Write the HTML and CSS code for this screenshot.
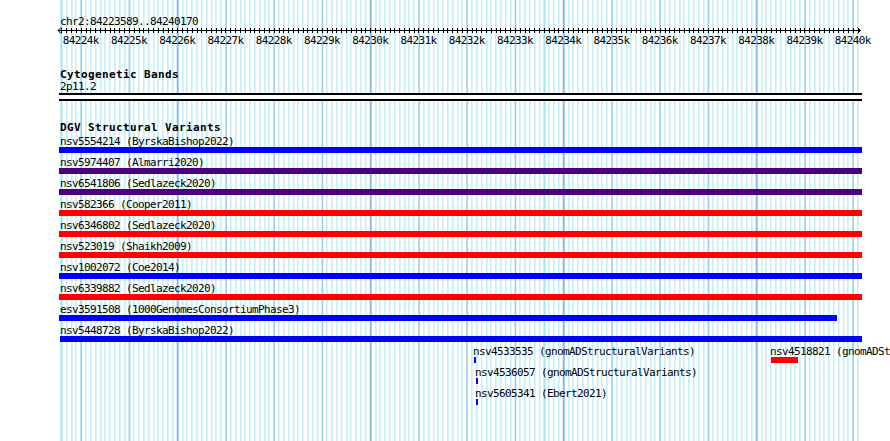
FILE: index.html
```html
<!DOCTYPE html>
<html lang="en">
<head>
	<meta charset="UTF-8">
	<title>DGV Structural Variants - chr2:84223589..84240170</title>
	<link rel="stylesheet" href="styles.css">
</head>
<body>
	<div id="tracks">
		<div class="pos">chr2:84223589..84240170</div>
		<svg class="axis" width="802" height="8" viewBox="0 0 802 8">
			<line x1="-2" y1="3.5" x2="800.5" y2="3.5" stroke="#000" stroke-width="1" />
			<line x1="1.4" y1="3.5" x2="800" y2="3.5" stroke="#000" stroke-width="5" stroke-dasharray="1 3.825" shape-rendering="crispEdges" />
			<polyline points="1,0.5 -2,3.5 1,6.5" fill="none" stroke="#000" stroke-width="1" />
			<polyline points="797.5,0.5 800.5,3.5 797.5,6.5" fill="none" stroke="#000" stroke-width="1" />
		</svg>
		<div class="ticks">
			<span>84224k</span><span>84225k</span><span>84226k</span><span>84227k</span>
			<span>84228k</span><span>84229k</span><span>84230k</span><span>84231k</span>
			<span>84232k</span><span>84233k</span><span>84234k</span><span>84235k</span>
			<span>84236k</span><span>84237k</span><span>84238k</span><span>84239k</span>
			<span>84240k</span>
		</div>

		<div class="title cyto">Cytogenetic Bands</div>
		<div class="band">2p11.2</div>
		<div class="sep"></div>

		<div class="title dgv">DGV Structural Variants</div>
		<div class="rows">
			<div class="row">
				<div class="feat"><div class="lbl">nsv5554214 (ByrskaBishop2022)</div><div class="bar gain" style="margin-left:-1px;width:803px"></div></div>
			</div>
			<div class="row">
				<div class="feat"><div class="lbl">nsv5974407 (Almarri2020)</div><div class="bar both" style="margin-left:-1px;width:803px"></div></div>
			</div>
			<div class="row">
				<div class="feat"><div class="lbl">nsv6541806 (Sedlazeck2020)</div><div class="bar both" style="margin-left:-1px;width:803px"></div></div>
			</div>
			<div class="row">
				<div class="feat"><div class="lbl">nsv582366 (Cooper2011)</div><div class="bar loss" style="margin-left:-1px;width:803px"></div></div>
			</div>
			<div class="row">
				<div class="feat"><div class="lbl">nsv6346802 (Sedlazeck2020)</div><div class="bar loss" style="margin-left:-1px;width:803px"></div></div>
			</div>
			<div class="row">
				<div class="feat"><div class="lbl">nsv523019 (Shaikh2009)</div><div class="bar loss" style="margin-left:-1px;width:803px"></div></div>
			</div>
			<div class="row">
				<div class="feat"><div class="lbl">nsv1002072 (Coe2014)</div><div class="bar gain" style="margin-left:-1px;width:803px"></div></div>
			</div>
			<div class="row">
				<div class="feat"><div class="lbl">nsv6339882 (Sedlazeck2020)</div><div class="bar loss" style="margin-left:-1px;width:803px"></div></div>
			</div>
			<div class="row">
				<div class="feat"><div class="lbl">esv3591508 (1000GenomesConsortiumPhase3)</div><div class="bar gain" style="margin-left:-1px;width:778px"></div></div>
			</div>
			<div class="row">
				<div class="feat"><div class="lbl">nsv5448728 (ByrskaBishop2022)</div><div class="bar gain" style="width:802px"></div></div>
			</div>
			<div class="row">
				<div class="feat" style="margin-left:413px"><div class="lbl">nsv4533535 (gnomADStructuralVariants)</div><div class="bar gain" style="margin-left:1px;width:2px"></div></div>
				<div class="feat" style="margin-left:710px"><div class="lbl">nsv4518821 (gnomADStructuralVariants)</div><div class="bar loss" style="margin-left:1px;width:27px"></div></div>
			</div>
			<div class="row">
				<div class="feat" style="margin-left:415px"><div class="lbl">nsv4536057 (gnomADStructuralVariants)</div><div class="bar gain" style="margin-left:1px;width:2px"></div></div>
			</div>
			<div class="row">
				<div class="feat" style="margin-left:415px"><div class="lbl">nsv5605341 (Ebert2021)</div><div class="bar gain" style="margin-left:1px;width:2px"></div></div>
			</div>
		</div>
	</div>
</body>
</html>
```

FILE: styles.css
```css
html, body{
	margin:0;
	padding:0;
	overflow:hidden;
	background:#fff;
}
body{
	width:890px;
	height:441px;
	font-family:"DejaVu Sans Mono", "Liberation Mono", monospace;
	font-size:11px;
	letter-spacing:-0.62px;
	line-height:10px;
	color:#000;
}
#tracks{
	margin-left:60px;
	width:802px;
	height:441px;
	padding-top:16px;
	box-sizing:border-box;
	background-color:#fff;
	background-image:
		repeating-linear-gradient(90deg, #8cbcee 0, #8cbcee 1px, transparent 1px, transparent 48.25px),
		repeating-linear-gradient(90deg, #a4e4ee 0, #a4e4ee 1px, transparent 1px, transparent 4.825px);
	background-position:20.7px 0, 1.4px 0;
}
.pos{
	height:10px;
	padding-top:1px;
	white-space:nowrap;
}
.axis{
	display:block;
	overflow:visible;
}
.ticks{
	display:flex;
	margin-left:-3.4px;
	height:10px;
	padding-top:1px;
	white-space:nowrap;
}
.ticks span{
	flex:0 0 48.25px;
	text-align:center;
}
.title{
	font-weight:bold;
	font-size:11px;
	line-height:11px;
	letter-spacing:0.38px;
	white-space:nowrap;
}
.title.cyto{
	margin-top:23px;
}
.band{
	height:10px;
	margin-top:2px;
}
.sep{
	margin:1px 0 0 -1px;
	width:803px;
	height:4px;
	border-top:2px solid #000;
	border-bottom:2px solid #000;
	background:#fff;
}
.title.dgv{
	margin-top:21px;
}
.rows{
	margin-top:3px;
}
.row{
	display:grid;
	height:21px;
}
.feat{
	grid-area:1 / 1;
	width:0;
}
.lbl{
	height:11px;
	line-height:10px;
	padding-top:1px;
	box-sizing:border-box;
	white-space:nowrap;
}
.bar{
	height:6px;
}
.gain{
	background:#0000ff;
}
.loss{
	background:#ff0000;
}
.both{
	background:#4b0082;
}
```
